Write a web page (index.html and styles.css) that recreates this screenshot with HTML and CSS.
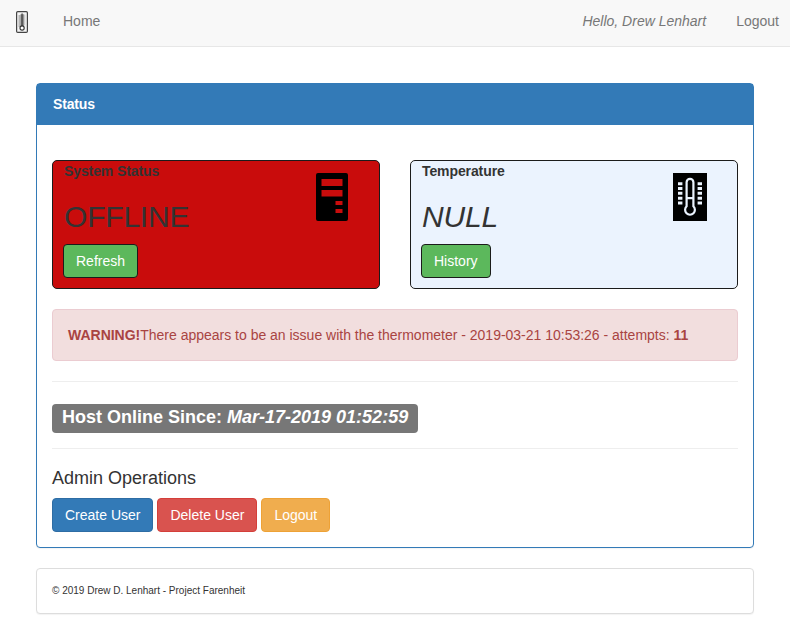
FILE: index.html
```html
<!DOCTYPE html>
<html lang="en">
<head>
<meta charset="utf-8">
<title>Project Farenheit</title>
<link rel="stylesheet" href="styles.css">
</head>
<body>
<nav class="navbar">
  <a class="brand" href="#" aria-label="Project Farenheit">
    <svg width="12" height="22" viewBox="0 0 12 22">
      <rect x=".6" y=".6" width="10.800" height="20.800" rx="1.200" fill="#f4f4f4" stroke="#444" stroke-width="1.200"/>
      <path d="M3.300 4.500v11" stroke="#777" stroke-width="1.600" stroke-dasharray="1 1"/>
      <path d="M8.600 3.500v11" stroke="#ccc" stroke-width="1.400"/>
      <path d="M4.900 15V4a1.200 1.200 0 0 1 2.400 0v11" fill="#555" stroke="#777" stroke-width=".8"/>
      <circle cx="6.100" cy="17" r="2.100" fill="#fff" stroke="#333" stroke-width="1.100"/>
    </svg>
  </a>
  <a class="nav-link home" href="#">Home</a>
  <span class="nav-link greeting"><em>Hello, Drew Lenhart</em></span>
  <a class="nav-link" href="#">Logout</a>
</nav>
<main class="container">
  <section class="panel panel-primary">
    <header class="panel-heading">Status</header>
    <div class="panel-body">
      <div class="cards">
        <div class="card offline">
          <div>
            <strong class="card-title">System Status</strong>
            <h2>OFFLINE</h2>
            <a class="btn success" href="#">Refresh</a>
          </div>
          <svg class="server" width="32" height="48" viewBox="0 0 32 48">
            <path fill-rule="evenodd" d="M2 0h28q2 0 2 2v44q0 2-2 2H2q-2 0-2-2V2q0-2 2-2zM5.500 6v7h21V6zM5.500 17v6.500h21V17zM19.500 28v4h7v-4zM19.500 36v4h7v-4z"/>
          </svg>
        </div>
        <div class="card temperature">
          <div>
            <strong class="card-title">Temperature</strong>
            <h2><em>NULL</em></h2>
            <a class="btn success" href="#">History</a>
          </div>
          <svg class="thermometer" width="34" height="48" viewBox="0 0 34 48">
            <path d="M0 0h34v48H0z"/>
            <path d="M5 10.700h4.400M5 15.500h4.400M5 20.300h4.400M5 25.200h4.400M5 30h4.400M24.600 10.700H29M24.600 15.500H29M24.600 20.300H29M24.600 25.200H29M24.600 30H29" stroke="#ebf3fe" stroke-width="2.900"/>
            <path d="M13.600 33.300V9.300a3.400 3.400 0 0 1 6.800 0v24a4.900 4.900 0 1 1-6.800 0zM13.600 25.200h6.800" fill="none" stroke="#ebf3fe" stroke-width="2.200"/>
          </svg>
        </div>
      </div>
      <div class="alert"><strong>WARNING!</strong>There appears to be an issue with the thermometer - 2019-03-21 10:53:26 - attempts: <strong>11</strong></div>
      <hr>
      <div class="uptime"><span class="label">Host Online Since: <em>Mar-17-2019 01:52:59</em></span></div>
      <hr>
      <h4>Admin Operations</h4>
      <div class="actions">
        <a class="btn primary" href="#">Create User</a>
        <a class="btn danger" href="#">Delete User</a>
        <a class="btn warning" href="#">Logout</a>
      </div>
    </div>
  </section>
  <footer class="panel footer">© 2019 Drew D. Lenhart - Project Farenheit</footer>
</main>
</body>
</html>
```
FILE: styles.css
```css
* { box-sizing: border-box; }
body {
  margin: 0;
  background: #fff;
  color: #333;
  font: 14px/20px "Liberation Sans", Arial, sans-serif;
}
a { text-decoration: none; }
svg { display: block; flex: none; }
.navbar {
  display: flex;
  height: 47px;
  padding: 11px 11px 0 16px;
  background: #f8f8f8;
  border-bottom: 1px solid #e7e7e7;
}
.nav-link { color: #777; margin-left: 30px; }
.nav-link.home { margin-left: 35px; }
.nav-link.greeting { margin-left: auto; }
.container { padding: 36px 36px 0; }
.panel {
  background: #fff;
  border: 1px solid #ddd;
  border-radius: 4px;
  box-shadow: 0 1px 1px rgba(0, 0, 0, .05);
  margin-bottom: 20px;
}
.panel-primary { height: 465px; border-color: #337ab7; }
.panel-heading {
  height: 41px;
  padding: 10px 16px;
  background: #337ab7;
  color: #fff;
  font-weight: bold;
  letter-spacing: -.15px;
}
.panel-body { padding: 35px 15px 15px; }
.cards { display: grid; grid-template-columns: 1fr 1fr; gap: 30px; }
.card {
  display: flex;
  justify-content: space-between;
  height: 129px;
  padding: 0 31px 0 11px;
  border: 1px solid #1b1b1b;
  border-radius: 5px;
}
.card svg { margin-top: 12px; }
.card.temperature { padding-right: 30px; }
.offline { background: #c90c0c; }
.temperature { background: #ebf3fe; }
.card-title { display: block; letter-spacing: -.1px; }
h2 {
  margin: 19px 0 11px;
  font-size: 30px;
  line-height: 33px;
  font-weight: normal;
  letter-spacing: -.2px;
}
.btn {
  display: inline-block;
  height: 34px;
  padding: 6px 12px;
  border: 1px solid;
  border-radius: 4px;
  color: #fff;
}
.btn.success { margin-left: -1px; background: #5cb85c; border-color: #1b1b1b; }
.primary { background: #337ab7; border-color: #2e6da4; }
.danger { background: #d9534f; border-color: #d43f3a; }
.warning { background: #f0ad4e; border-color: #eea236; }
.alert {
  height: 52px;
  margin-top: 20px;
  padding: 15px;
  background: #f2dede;
  border: 1px solid #ebccd1;
  border-radius: 4px;
  color: #a94442;
  letter-spacing: -.008px;
}
hr { height: 1px; margin: 20px 0 0; border: 0; background: #eee; }
.uptime { height: 51px; margin-bottom: -5px; padding-top: 22px; }
.uptime + hr { margin-top: 20px; }
.label {
  display: inline-block;
  height: 29px;
  padding: 4px 10px 0;
  background: #777;
  border-radius: 4px;
  color: #fff;
  font-size: 18px;
  line-height: 18px;
  font-weight: bold;
}
h4 { margin: 19px 0 10px; font-size: 18px; line-height: 20px; font-weight: normal; }
.actions { display: flex; gap: 4px; }
.footer { height: 46px; padding: 12px 15px; font-size: 10px; line-height: 20px; }
```
